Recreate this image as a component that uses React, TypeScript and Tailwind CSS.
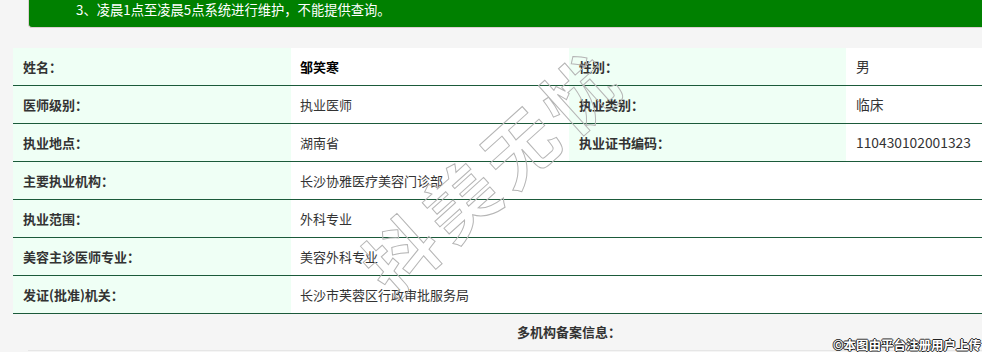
import React from 'react';

const pairRows = [
  { a: '姓名：', av: '邹笑寒', b: '性别：', bv: '男', strong: true },
  { a: '医师级别：', av: '执业医师', b: '执业类别：', bv: '临床' },
  { a: '执业地点：', av: '湖南省', b: '执业证书编码：', bv: '110430102001323' },
];

const wideRows = [
  { a: '主要执业机构：', av: '长沙协雅医疗美容门诊部' },
  { a: '执业范围：', av: '外科专业' },
  { a: '美容主诊医师专业：', av: '美容外科专业' },
  { a: '发证(批准)机关：', av: '长沙市芙蓉区行政审批服务局' },
];

const label = 'flex items-center bg-[#effff5] pl-[10px] font-bold text-[#333]';
const value = 'flex items-center bg-white pl-[9px] text-[#333]';

export default function App() {
  return (
    <div className="relative w-[982px] h-[352px] overflow-hidden bg-[#f5f5f5] font-['Microsoft_YaHei','Noto_Sans_CJK_SC',sans-serif] text-[13px]">
      {/* notice banner */}
      <div className="ml-[28px] h-[28px] bg-[#008000] border-l border-b border-[#dcd0d0] rounded-bl-[4px] pl-[47px] text-white text-[13.3px] leading-[20px]">
        3、凌晨1点至凌晨5点系统进行维护，不能提供查询。
      </div>

      {/* info table */}
      <div className="mt-[20px] ml-[13px] w-[1112px]">
        {pairRows.map((r) => (
          <div key={r.a} className="grid grid-cols-[278px_278px_277px_279px] h-[38px] border-b border-[#1b5a3a]">
            <div className={label}>{r.a}</div>
            <div className={r.strong ? value + ' font-bold !text-black' : value}>{r.av}</div>
            <div className={label}>{r.b}</div>
            <div className={value + ' !pl-[10px] text-[13.8px]'}>{r.bv}</div>
          </div>
        ))}
        {wideRows.map((r) => (
          <div key={r.a} className="grid grid-cols-[278px_1fr] h-[38px] border-b border-[#1b5a3a]">
            <div className={label}>{r.a}</div>
            <div className={value}>{r.av}</div>
          </div>
        ))}
        <div className="h-[36px] flex items-center justify-center font-bold text-[#333]">
          多机构备案信息：
        </div>
      </div>
      <div className="ml-[28px] border-t border-[#e6e6e6]" />

      {/* diagonal watermark */}
      <div className="pointer-events-none absolute left-[488px] top-[172px] -translate-x-1/2 -translate-y-1/2 -rotate-[42deg] flex gap-[8px] text-[72px] leading-none font-bold text-transparent [-webkit-text-stroke:1px_#b5b5b5]">
        <span>抖</span>
        <span>美</span>
        <span>无</span>
        <span>忧</span>
      </div>

      {/* upload notice */}
      <div className="absolute right-[1px] bottom-[-2px] text-[12.5px] font-bold text-white leading-[18px] [text-shadow:-1px_0_#222,1px_0_#222,0_-1px_#222,0_1px_#222]">
        ©本图由平台注册用户上传
      </div>
    </div>
  );
}
